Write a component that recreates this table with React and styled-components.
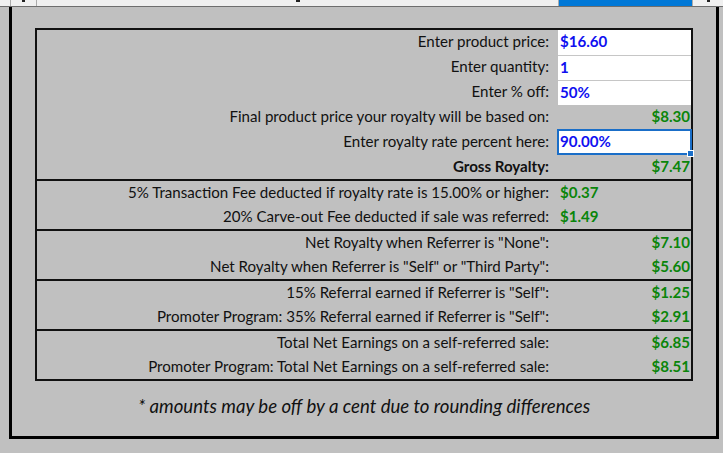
import React from 'react';
import styled, { createGlobalStyle } from 'styled-components';

const Global = createGlobalStyle`
  html, body { margin: 0; padding: 0; background: #c0c0c0; }
  body {
    width: 723px; height: 453px; overflow: hidden;
    font-family: Lato, "Open Sans", sans-serif;
    color: #111;
  }
  * { box-sizing: border-box; }
`;

const Header = styled.div`
  height: 7px;
  display: grid;
  grid-template-columns: 10px 26px 522px 134px 31px;
  background: #f0f0f0;
  border-bottom: 1px solid #6e6e6e;
`;

const HeadCell = styled.div`
  display: flex;
  justify-content: center;
  align-items: flex-start;
  border-left: ${p => (p.$first ? 'none' : '1px solid #ababab')};
  background: ${p => (p.$selected ? '#0078d7' : 'transparent')};
`;

const Mark = styled.span`
  width: ${p => p.$w || 3}px;
  height: 2px;
  background: ${p => (p.$light ? '#fff' : '#222')};
`;

const Frame = styled.div`
  margin-left: 9px;
  width: 710px;
  height: 432px;
  border: 3px solid #000;
  border-top: none;
  padding: 21px 0 0 23px;
  display: flex;
  flex-direction: column;
  align-items: flex-start;
`;

const Table = styled.div`
  width: 658px;
  border: 2px solid #111;
  display: flex;
  flex-direction: column;
`;

const Group = styled.div`
  display: grid;
  grid-template-columns: 521px 1fr;
  grid-auto-rows: 1fr;
  height: ${p => p.$h}px;
  border-top: ${p => (p.$first ? 'none' : '2px solid #111')};
  box-sizing: content-box;
`;

const Label = styled.div`
  display: flex;
  align-items: center;
  justify-content: flex-end;
  padding: 0 9px 2px 0;
  font-size: 15.1px;
  font-weight: ${p => (p.$bold ? 700 : 400)};
  white-space: nowrap;
`;

const Value = styled.div`
  position: relative;
  display: flex;
  align-items: center;
  justify-content: ${p => (p.$left ? 'flex-start' : 'flex-end')};
  padding: 0 1px 2px 2px;
  font-size: 15.1px;
  font-weight: 700;
  color: ${p => (p.$input ? '#1010f0' : '#0a850a')};
  background: ${p => (p.$input ? '#fff' : 'transparent')};
  border-top: ${p => (p.$grid ? '1px solid #c6c6c6' : 'none')};
`;

const Selection = styled.div`
  position: absolute;
  inset: 0 -1px -1px -1px;
  border: 2px solid #1a6ec8;
  pointer-events: none;
  &::after {
    content: '';
    position: absolute;
    right: -4px;
    bottom: -4px;
    width: 5px;
    height: 5px;
    background: #1a6ec8;
    border: 1px solid #fff;
  }
`;

const Note = styled.div`
  align-self: stretch;
  margin-left: -23px;
  padding-top: 14px;
  text-align: center;
  font-size: 18.6px;
  font-style: italic;
  color: #111;
`;

const groups = [
  {
    h: 149,
    rows: [
      { label: 'Enter product price:', value: '$16.60', input: true },
      { label: 'Enter quantity:', value: '1', input: true, grid: true },
      { label: 'Enter % off:', value: '50%', input: true, grid: true },
      { label: 'Final product price your royalty will be based on:', value: '$8.30' },
      { label: 'Enter royalty rate percent here:', value: '90.00%', input: true, selected: true },
      { label: 'Gross Royalty:', value: '$7.47', bold: true },
    ],
  },
  {
    h: 48,
    rows: [
      { label: '5% Transaction Fee deducted if royalty rate is 15.00% or higher:', value: '$0.37', left: true },
      { label: '20% Carve-out Fee deducted if sale was referred:', value: '$1.49', left: true },
    ],
  },
  {
    h: 48,
    rows: [
      { label: 'Net Royalty when Referrer is "None":', value: '$7.10' },
      { label: 'Net Royalty when Referrer is "Self" or "Third Party":', value: '$5.60' },
    ],
  },
  {
    h: 48,
    rows: [
      { label: '15% Referral earned if Referrer is "Self":', value: '$1.25' },
      { label: 'Promoter Program: 35% Referral earned if Referrer is "Self":', value: '$2.91' },
    ],
  },
  {
    h: 48,
    rows: [
      { label: 'Total Net Earnings on a self-referred sale:', value: '$6.85' },
      { label: 'Promoter Program: Total Net Earnings on a self-referred sale:', value: '$8.51' },
    ],
  },
];

export default function App() {
  return (
    <>
      <Global />
      <Header>
        <HeadCell $first />
        <HeadCell><Mark /></HeadCell>
        <HeadCell><Mark $w={4} /></HeadCell>
        <HeadCell $selected />
        <HeadCell><Mark /></HeadCell>
      </Header>
      <Frame>
        <Table>
          {groups.map((g, gi) => (
            <Group key={gi} $h={g.h} $first={gi === 0}>
              {g.rows.map((r, ri) => (
                <React.Fragment key={ri}>
                  <Label $bold={r.bold}>{r.label}</Label>
                  <Value $input={r.input} $grid={r.grid} $left={r.left || r.input}>
                    {r.value}
                    {r.selected && <Selection />}
                  </Value>
                </React.Fragment>
              ))}
            </Group>
          ))}
        </Table>
        <Note>* amounts may be off by a cent due to rounding differences</Note>
      </Frame>
    </>
  );
}
